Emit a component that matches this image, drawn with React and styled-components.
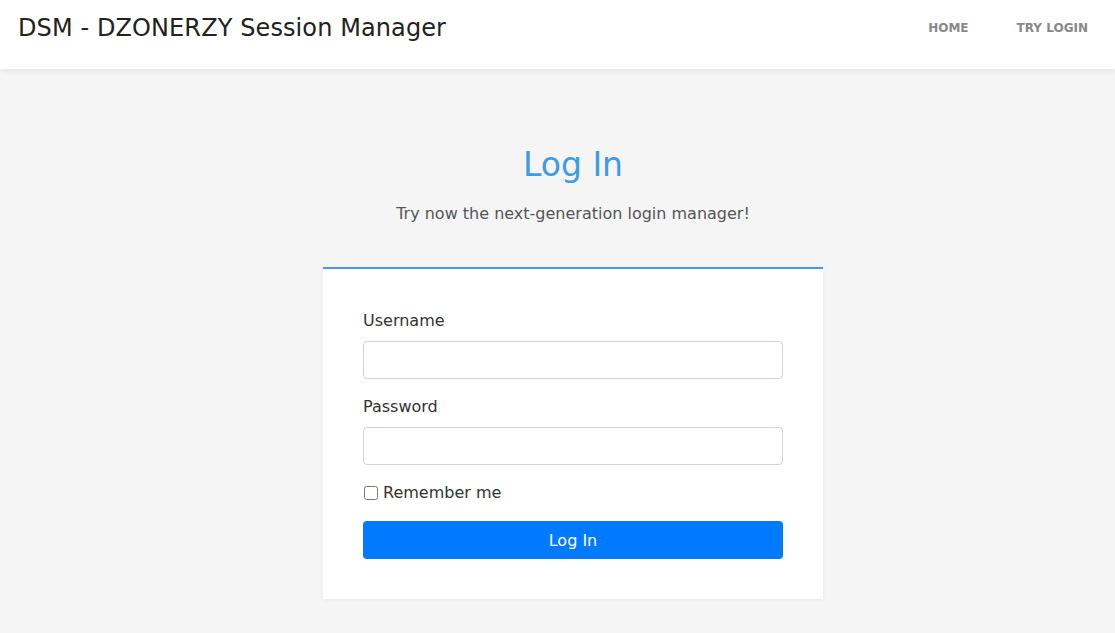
import React from "react";
import styled, { createGlobalStyle } from "styled-components";

const GlobalStyle = createGlobalStyle`
  * {
    box-sizing: border-box;
  }

  body {
    margin: 0;
    font-family: "DejaVu Sans", "Open Sans", sans-serif;
    background-color: #f5f5f5;
    color: #333;
  }
`;

const Page = styled.div`
  min-height: 100vh;
  background-color: #f5f5f5;
`;

const Navbar = styled.nav`
  height: 69px;
  background-color: #fff;
  box-shadow: 0 2px 6px rgba(0, 0, 0, 0.08);
  display: flex;
  align-items: flex-start;
  justify-content: space-between;
  padding: 0 27px 0 18px;
`;

const Brand = styled.div`
  font-size: 24px;
  line-height: 56px;
  color: #222;
  letter-spacing: 0.1px;
`;

const NavLinks = styled.div`
  display: flex;
  gap: 48px;
  padding-top: 19px;
`;

const NavLink = styled.a`
  font-size: 12px;
  font-weight: bold;
  line-height: 18px;
  color: #888;
  text-decoration: none;
  text-transform: uppercase;
  cursor: pointer;
`;

const Main = styled.main`
  display: flex;
  flex-direction: column;
  align-items: center;
  padding-top: 76px;
  padding-left: 31px;
`;

const Title = styled.h1`
  margin: 0;
  font-size: 33px;
  font-weight: normal;
  line-height: 40px;
  color: #3d9be9;
`;

const Subtitle = styled.p`
  margin: 17px 0 41px;
  font-size: 16px;
  line-height: 24px;
  color: #555;
`;

const Card = styled.form`
  width: 500px;
  background-color: #fff;
  border-top: 2px solid #4a97ec;
  box-shadow: 0 1px 4px rgba(0, 0, 0, 0.06);
  padding: 40px;
  display: flex;
  flex-direction: column;
  gap: 16px;
`;

const Field = styled.div`
  display: flex;
  flex-direction: column;
`;

const Label = styled.label`
  font-size: 16px;
  line-height: 24px;
  color: #333;
  margin-bottom: 8px;
`;

const Input = styled.input`
  height: 38px;
  width: 100%;
  border: 1px solid #ced4da;
  border-radius: 4px;
  padding: 6px 12px;
  font-size: 16px;
  font-family: inherit;
  background-color: #fff;
`;

const CheckRow = styled.label`
  display: flex;
  align-items: center;
  font-size: 16px;
  line-height: 24px;
  color: #333;
`;

const Checkbox = styled.input`
  width: 14px;
  height: 14px;
  margin: 0 5px 0 1px;
`;

const SubmitButton = styled.button`
  height: 38px;
  width: 100%;
  border: none;
  border-radius: 4px;
  background-color: #007bff;
  color: #fff;
  font-family: inherit;
  font-size: 16px;
  cursor: pointer;
`;

export default function App() {
  return (
    <Page>
      <GlobalStyle />
      <Navbar>
        <Brand>DSM - DZONERZY Session Manager</Brand>
        <NavLinks>
          <NavLink>Home</NavLink>
          <NavLink>Try Login</NavLink>
        </NavLinks>
      </Navbar>
      <Main>
        <Title>Log In</Title>
        <Subtitle>Try now the next-generation login manager!</Subtitle>
        <Card onSubmit={(e) => e.preventDefault()}>
          <Field>
            <Label htmlFor="username">Username</Label>
            <Input id="username" type="text" />
          </Field>
          <Field>
            <Label htmlFor="password">Password</Label>
            <Input id="password" type="password" />
          </Field>
          <CheckRow>
            <Checkbox type="checkbox" />
            Remember me
          </CheckRow>
          <SubmitButton type="submit">Log In</SubmitButton>
        </Card>
      </Main>
    </Page>
  );
}
